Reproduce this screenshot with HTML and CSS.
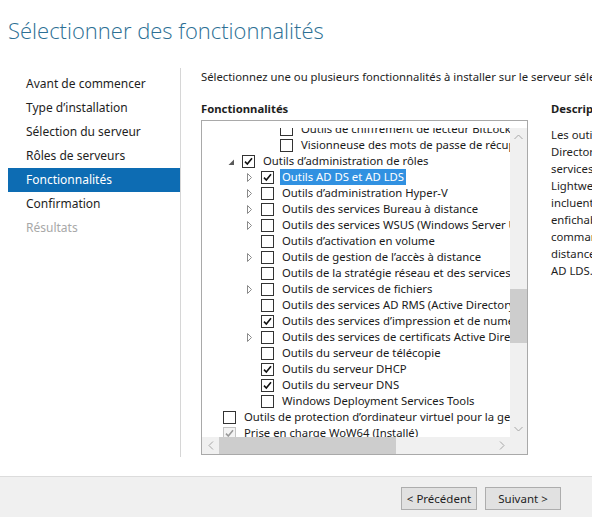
FILE: index.html
```html
<!DOCTYPE html>
<html lang="fr">
<head>
<meta charset="utf-8">
<title>Assistant Ajout de rôles et de fonctionnalités</title>
<link rel="stylesheet" href="styles.css">
</head>
<body>
<div class="window">
  <header class="title">Sélectionner des fonctionnalités</header>
  <div class="content">
    <nav class="steps">
      <div class="step">Avant de commencer</div>
      <div class="step">Type d’installation</div>
      <div class="step">Sélection du serveur</div>
      <div class="step">Rôles de serveurs</div>
      <div class="step active">Fonctionnalités</div>
      <div class="step">Confirmation</div>
      <div class="step disabled">Résultats</div>
    </nav>
    <main class="main">
      <p class="intro">Sélectionnez une ou plusieurs fonctionnalités à installer sur le serveur sélectionné.</p>
      <div class="columns">
        <section class="features">
          <h2 class="col-head">Fonctionnalités</h2>
          <div class="treebox">
            <div class="tree-area">
              <ul class="tree">
                <li class="row l3"><span class="exp"></span><span class="cb"></span><span class="lbl">Outils de chiffrement de lecteur BitLocker</span></li>
                <li class="row l3"><span class="exp"></span><span class="cb"></span><span class="lbl">Visionneuse des mots de passe de récupération BitLocker</span></li>
                <li class="row l1"><span class="exp"><svg class="ico-open" width="7" height="7" viewBox="0 0 7 7"><polygon points="6,0.5 6,6 0.5,6" fill="#5a5a5a"/></svg></span><span class="cb on"><svg width="11" height="11" viewBox="0 0 11 11"><path d="M2 5.6 L4.3 8 L9 2.3" fill="none" stroke="#111" stroke-width="1.6"/></svg></span><span class="lbl">Outils d’administration de rôles</span></li>
                <li class="row l2"><span class="exp"><svg class="ico-closed" width="5" height="9" viewBox="0 0 5 9"><polygon points="0.5,0.5 4.5,4.5 0.5,8.5" fill="none" stroke="#8a8a8a"/></svg></span><span class="cb on"><svg width="11" height="11" viewBox="0 0 11 11"><path d="M2 5.6 L4.3 8 L9 2.3" fill="none" stroke="#111" stroke-width="1.6"/></svg></span><span class="lbl selected">Outils AD DS et AD LDS</span></li>
                <li class="row l2"><span class="exp"><svg class="ico-closed" width="5" height="9" viewBox="0 0 5 9"><polygon points="0.5,0.5 4.5,4.5 0.5,8.5" fill="none" stroke="#8a8a8a"/></svg></span><span class="cb"></span><span class="lbl">Outils d’administration Hyper-V</span></li>
                <li class="row l2"><span class="exp"><svg class="ico-closed" width="5" height="9" viewBox="0 0 5 9"><polygon points="0.5,0.5 4.5,4.5 0.5,8.5" fill="none" stroke="#8a8a8a"/></svg></span><span class="cb"></span><span class="lbl">Outils des services Bureau à distance</span></li>
                <li class="row l2"><span class="exp"><svg class="ico-closed" width="5" height="9" viewBox="0 0 5 9"><polygon points="0.5,0.5 4.5,4.5 0.5,8.5" fill="none" stroke="#8a8a8a"/></svg></span><span class="cb"></span><span class="lbl">Outils des services WSUS (Windows Server Update Services)</span></li>
                <li class="row l2"><span class="exp"></span><span class="cb"></span><span class="lbl">Outils d’activation en volume</span></li>
                <li class="row l2"><span class="exp"><svg class="ico-closed" width="5" height="9" viewBox="0 0 5 9"><polygon points="0.5,0.5 4.5,4.5 0.5,8.5" fill="none" stroke="#8a8a8a"/></svg></span><span class="cb"></span><span class="lbl">Outils de gestion de l’accès à distance</span></li>
                <li class="row l2"><span class="exp"></span><span class="cb"></span><span class="lbl">Outils de la stratégie réseau et des services d’accès</span></li>
                <li class="row l2"><span class="exp"><svg class="ico-closed" width="5" height="9" viewBox="0 0 5 9"><polygon points="0.5,0.5 4.5,4.5 0.5,8.5" fill="none" stroke="#8a8a8a"/></svg></span><span class="cb"></span><span class="lbl">Outils de services de fichiers</span></li>
                <li class="row l2"><span class="exp"></span><span class="cb"></span><span class="lbl">Outils des services AD RMS (Active Directory Rights Management Services)</span></li>
                <li class="row l2"><span class="exp"></span><span class="cb on"><svg width="11" height="11" viewBox="0 0 11 11"><path d="M2 5.6 L4.3 8 L9 2.3" fill="none" stroke="#111" stroke-width="1.6"/></svg></span><span class="lbl">Outils des services d’impression et de numérisation de documents</span></li>
                <li class="row l2"><span class="exp"><svg class="ico-closed" width="5" height="9" viewBox="0 0 5 9"><polygon points="0.5,0.5 4.5,4.5 0.5,8.5" fill="none" stroke="#8a8a8a"/></svg></span><span class="cb"></span><span class="lbl">Outils des services de certificats Active Directory</span></li>
                <li class="row l2"><span class="exp"></span><span class="cb"></span><span class="lbl">Outils du serveur de télécopie</span></li>
                <li class="row l2"><span class="exp"></span><span class="cb on"><svg width="11" height="11" viewBox="0 0 11 11"><path d="M2 5.6 L4.3 8 L9 2.3" fill="none" stroke="#111" stroke-width="1.6"/></svg></span><span class="lbl">Outils du serveur DHCP</span></li>
                <li class="row l2"><span class="exp"></span><span class="cb on"><svg width="11" height="11" viewBox="0 0 11 11"><path d="M2 5.6 L4.3 8 L9 2.3" fill="none" stroke="#111" stroke-width="1.6"/></svg></span><span class="lbl">Outils du serveur DNS</span></li>
                <li class="row l2"><span class="exp"></span><span class="cb"></span><span class="lbl">Windows Deployment Services Tools</span></li>
                <li class="row l0"><span class="exp"></span><span class="cb"></span><span class="lbl">Outils de protection d’ordinateur virtuel pour la gestion de structure</span></li>
                <li class="row l0 dis"><span class="exp"></span><span class="cb on"><svg width="11" height="11" viewBox="0 0 11 11"><path d="M2 5.6 L4.3 8 L9 2.3" fill="none" stroke="#9a9a9a" stroke-width="1.6"/></svg></span><span class="lbl">Prise en charge WoW64 (Installé)</span></li>
              </ul>
            </div>
            <div class="vscroll">
              <div class="sb-btn"><svg width="9" height="6" viewBox="0 0 9 6"><path d="M0.5 5 L4.5 1 L8.5 5" fill="none" stroke="#a6a6a6"/></svg></div>
              <div class="v-track"><div class="v-thumb" style="margin-top:144px;height:54px"></div></div>
              <div class="sb-btn"><svg width="9" height="6" viewBox="0 0 9 6"><path d="M0.5 1 L4.5 5 L8.5 1" fill="none" stroke="#a6a6a6"/></svg></div>
            </div>
            <div class="hscroll">
              <div class="sb-btn"><svg width="6" height="9" viewBox="0 0 6 9"><path d="M5 0.5 L1 4.5 L5 8.5" fill="none" stroke="#a6a6a6"/></svg></div>
              <div class="h-track"><div class="h-thumb" style="width:177px"></div></div>
              <div class="sb-btn"><svg width="6" height="9" viewBox="0 0 6 9"><path d="M1 0.5 L5 4.5 L1 8.5" fill="none" stroke="#a6a6a6"/></svg></div>
            </div>
            <div class="corner"></div>
          </div>
        </section>
        <section class="desc">
          <h2 class="col-head">Description</h2>
          <div class="desc-text">
            <div>Les outils des services AD DS (Active</div>
            <div>Directory Domain Services) et des</div>
            <div>services AD LDS (Active Directory</div>
            <div>Lightweight Directory Services)</div>
            <div>incluent des composants logiciels</div>
            <div>enfichables et des outils en ligne de</div>
            <div>commande pour la gestion à</div>
            <div>distance d’AD DS et</div>
            <div>AD LDS.</div>
          </div>
        </section>
      </div>
    </main>
  </div>
  <footer class="footer">
    <button class="btn">&lt; Précédent</button>
    <button class="btn">Suivant &gt;</button>
  </footer>
</div>
</body>
</html>
```

FILE: styles.css
```css
* { box-sizing: border-box; }

html, body {
  margin: 0;
  padding: 0;
  background: #ffffff;
}

body {
  font-family: "Noto Sans", "Open Sans", "DejaVu Sans", sans-serif;
  font-size: 12px;
  color: #1e1e1e;
}

.window {
  width: 592px;
  height: 517px;
  overflow: hidden;
  display: flex;
  flex-direction: column;
}

.title {
  height: 68px;
  padding: 15px 0 0 8px;
  font-family: "Open Sans", "Noto Sans", sans-serif;
  font-weight: 300;
  font-size: 22px;
  line-height: 30px;
  color: #2c6f94;
  white-space: nowrap;
}

.content {
  display: flex;
  height: 408px;
}

.steps {
  margin-left: 8px;
  width: 173px;
  height: 389px;
  padding-top: 4px;
  border-right: 1px solid #d6d6d6;
  flex: none;
}

.step {
  height: 24px;
  line-height: 24px;
  padding-left: 18px;
  width: 172px;
  white-space: nowrap;
}

.step.active {
  background: #0d6cb3;
  color: #ffffff;
}

.step.disabled {
  color: #a8a8a8;
}

.main {
  flex: 1;
  min-width: 0;
  padding: 1px 0 0 20px;
  overflow: hidden;
  font-size: 11.3px;
}

.intro {
  margin: 0;
  height: 16px;
  line-height: 16px;
  white-space: nowrap;
}

.columns {
  display: flex;
  gap: 23px;
  margin-top: 16px;
}

.col-head {
  margin: 0 0 3px;
  font-size: 11.3px;
  font-weight: 700;
  line-height: 16px;
  height: 16px;
  white-space: nowrap;
}

.features {
  flex: none;
  width: 327px;
}

.treebox {
  border: 1px solid #a9a9a9;
  background: #ffffff;
  padding-top: 7px;
  display: grid;
  grid-template-columns: 308px 17px;
  grid-template-rows: 309px 17px;
  width: 327px;
}

.tree-area {
  overflow: hidden;
  background: #ffffff;
}

.tree {
  list-style: none;
  margin: -7px 0 0;
  padding: 0;
}

.row {
  display: flex;
  align-items: center;
  height: 16px;
  white-space: nowrap;
}

.row.l0 { padding-left: 0; }
.row.l1 { padding-left: 19px; }
.row.l2 { padding-left: 38px; }
.row.l3 { padding-left: 57px; }

.exp {
  flex: none;
  width: 21px;
  height: 16px;
  display: flex;
  align-items: center;
  padding-left: 7px;
}

.exp .ico-open { margin-top: 2px; }

.cb {
  flex: none;
  width: 13px;
  height: 13px;
  border: 1px solid #333333;
  background: #ffffff;
  display: flex;
  align-items: center;
  justify-content: center;
}

.row.dis .cb {
  border-color: #c4c4c4;
  background: #f4f4f4;
}

.lbl {
  margin-left: 6px;
  padding: 0 2px;
  line-height: 16px;
  color: #1a1a1a;
}

.lbl.selected {
  background: #3191e1;
  color: #ffffff;
}

.vscroll {
  background: #f0f0f0;
  display: flex;
  flex-direction: column;
}

.sb-btn {
  flex: none;
  width: 17px;
  height: 17px;
  display: flex;
  align-items: center;
  justify-content: center;
}

.v-track {
  flex: 1;
}

.v-thumb {
  background: #cdcdcd;
  width: 17px;
}

.hscroll {
  background: #f0f0f0;
  display: flex;
}

.h-track {
  flex: 1;
  display: flex;
  align-items: stretch;
}

.h-thumb {
  background: #cdcdcd;
  height: 17px;
}

.corner {
  background: #f0f0f0;
}

.desc {
  flex: none;
  width: 240px;
}

.desc-text {
  margin-top: 9px;
  line-height: 17px;
  white-space: nowrap;
}

.footer {
  flex: 1;
  background: #f0f0f0;
  border-top: 1px solid #dcdcdc;
  display: flex;
  justify-content: flex-end;
  align-items: flex-start;
  gap: 8px;
  padding: 10px 31px 0 0;
}

.btn {
  font-family: inherit;
  font-size: 11.5px;
  color: #1e1e1e;
  background: #e1e1e1;
  border: 1px solid #adadad;
  height: 23px;
  width: 76px;
  padding: 0;
  border-radius: 0;
}
```
